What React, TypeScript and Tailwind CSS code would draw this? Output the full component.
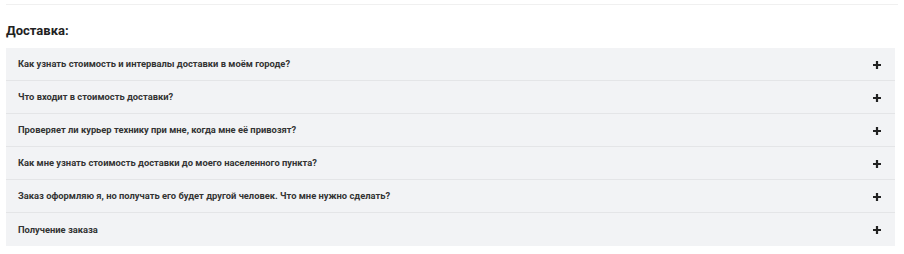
const items = [
  "Как узнать стоимость и интервалы доставки в моём городе?",
  "Что входит в стоимость доставки?",
  "Проверяет ли курьер технику при мне, когда мне её привозят?",
  "Как мне узнать стоимость доставки до моего населенного пункта?",
  "Заказ оформляю я, но получать его будет другой человек. Что мне нужно сделать?",
  "Получение заказа",
];

const Plus = () => (
  <svg width="10" height="10" viewBox="0 0 10 10" className="shrink-0">
    <path d="M5 1v8M1 5h8" stroke="#222" strokeWidth="2.2" />
  </svg>
);

export default function App() {
  return (
    <div className="w-[904px] h-[254px] bg-white px-[6px] pt-[4px] font-['Roboto',sans-serif]">
      <div className="h-px bg-[#f0f0f0]" />
      <h3 className="mt-[18px] text-[13px] leading-[16px] font-bold text-[#222]">Доставка:</h3>
      <div className="mt-[9px] w-[889px]">
        {items.map((q, i) => (
          <div
            key={i}
            className={`flex items-center justify-between h-[33px] pl-[12px] pr-[13px] pt-px bg-[#f2f3f5] ${
              i < items.length - 1 ? "border-b border-[#e4e5e7]" : ""
            }`}
          >
            <span className="text-[9.35px] font-bold text-[#333]">{q}</span>
            <Plus />
          </div>
        ))}
      </div>
    </div>
  );
}
